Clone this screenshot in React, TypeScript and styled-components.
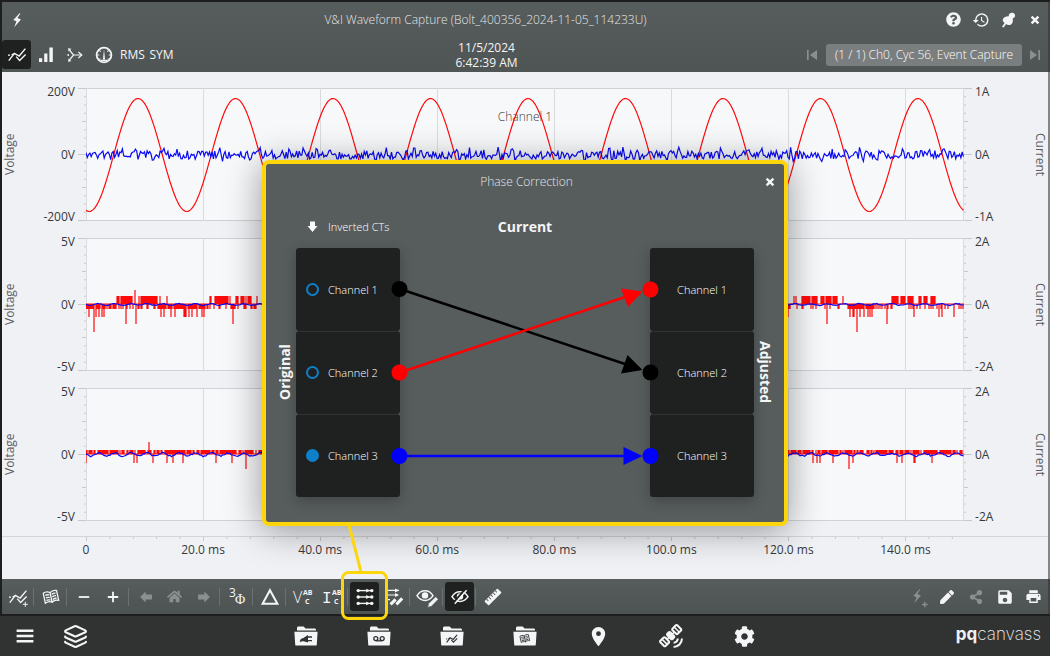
import React from 'react';
import styled, { createGlobalStyle, css } from 'styled-components';
import { FaQuestionCircle, FaHome, FaShareAlt, FaCog, FaPen } from 'react-icons/fa';
import { MdHistory, MdSkipPrevious, MdSkipNext, MdSave, MdPrint, MdSatelliteAlt, MdLocationOn } from 'react-icons/md';
import { Layers } from 'lucide-react';

const GlobalStyle = createGlobalStyle`
  *, *::before, *::after { box-sizing: border-box; }
  body { margin: 0; background: #1d1f1f; font-family: "Open Sans", "Noto Sans", sans-serif; font-size: 12px; }
  button { font: inherit; color: inherit; }
`;

/* ---------- shell ---------- */

const Page = styled.div`
  min-height: 100vh;
  display: flex;
  flex-direction: column;
  background: #1d1f1f;
  color: #f4f5f6;
`;

const AppWindow = styled.main`
  position: relative;
  flex: 1;
  display: flex;
  flex-direction: column;
  margin: 2px 0 2px 2px;
`;

const Header = styled.header`
  background: linear-gradient(#575c5c, #4f5454);
  border-right: 2px solid #3e4242;
`;

const Bar = styled.div`
  display: grid;
  grid-template-columns: auto 1fr auto;
  align-items: center;
  height: 35px;
`;

const Title = styled.h1`
  margin: 0;
  text-align: center;
  font-size: 12px;
  font-weight: 300;
  color: #e4e7e7;
`;

const Group = styled.div<{ $end?: boolean }>`
  display: flex;
  align-items: center;
  justify-content: ${p => (p.$end ? 'flex-end' : 'flex-start')};
`;

const ToolButton = styled.button<{ $active?: boolean; $w?: number }>`
  position: relative;
  display: flex;
  align-items: center;
  justify-content: center;
  flex: none;
  width: ${p => p.$w ?? 29}px;
  height: 29px;
  padding: 0;
  border: 0;
  border-radius: 3px;
  background: ${p => (p.$active ? '#1f2121' : 'transparent')};
  color: #f4f5f6;
  cursor: pointer;
  &:disabled { color: #8b8f8f; cursor: default; }
  svg { flex: none; }
`;

const Stamp = styled.time`
  text-align: center;
  line-height: 15px;
`;

const Capture = styled.button`
  width: 196px;
  height: 22px;
  padding: 0;
  border: 0;
  border-radius: 3px;
  background: #7b7e7e;
  font-weight: 300;
  color: #fff;
  white-space: nowrap;
`;

/* ---------- charts ---------- */

const Charts = styled.section`
  flex: 1;
  display: flex;
  flex-direction: column;
  background: #f0f1f5;
  border-right: 2px solid #858787;
  color: #36393b;
`;

const ChartList = styled.div`
  flex: 1;
  display: flex;
  flex-direction: column;
  gap: 17px;
  padding: 16px 0 15px;
`;

const ChartRow = styled.div`
  flex: 1;
  min-height: 133px;
  display: grid;
  grid-template-columns: 84px 1fr 84px;
`;

const Axis = styled.div<{ $right?: boolean }>`
  display: flex;
  flex-direction: ${p => (p.$right ? 'row-reverse' : 'row')};
  align-items: stretch;
`;

const AxisName = styled.div<{ $right?: boolean }>`
  width: 16px;
  line-height: 16px;
  writing-mode: vertical-rl;
  text-align: center;
  color: #5a5d60;
  ${p => !p.$right && css`transform: rotate(180deg);`}
`;

const AxisValues = styled.div<{ $right?: boolean }>`
  flex: 1;
  display: flex;
  flex-direction: column;
  justify-content: space-between;
  margin: -4px 0;
  padding: 0 3px;
  line-height: 16px;
  text-align: ${p => (p.$right ? 'left' : 'right')};
`;

const Ticks = styled.svg`
  display: block;
  flex: none;
  width: 8px;
  height: 100%;
`;

const Plot = styled.div`
  position: relative;
  background: #f7f8fa;
`;

const PlotSvg = styled.svg`
  position: absolute;
  inset: 0;
  width: 100%;
  height: 100%;
`;

const PlotName = styled.span`
  position: absolute;
  top: 21px;
  left: 0;
  right: 0;
  line-height: 16px;
  text-align: center;
  font-weight: 300;
  color: #36393b;
`;

const TimeAxis = styled.div`
  height: 43px;
  padding: 0 84px;
  border-top: 1px solid #d2d4d7;
`;

const TimeTicks = styled.svg`
  display: block;
  width: 100%;
  height: 5px;
`;

const TimeLabels = styled.div`
  display: grid;
  grid-template-columns: repeat(7, 2fr) 1fr;
  line-height: 16px;
`;

const TimeLabel = styled.span`
  display: flex;
  justify-content: center;
  width: 0;
  white-space: nowrap;
`;

const PLOT_W = 878;
const PLOT_H = 133;
const MID = 66;
const CYCLE = 97.5;

function random(seed: number) {
  let s = seed;
  return () => {
    s = (s * 1664525 + 1013904223) % 4294967296;
    return s / 4294967296;
  };
}

type Pt = [number, number];
const toPath = (pts: Pt[]) => 'M' + pts.map(([x, y]) => `${x.toFixed(1)} ${y.toFixed(1)}`).join('L');

function sine() {
  const pts: Pt[] = [];
  for (let x = 0; x <= PLOT_W; x += 1.5) {
    pts.push([x, MID + 1 - 56.5 * Math.cos((2 * Math.PI * (x - 52)) / CYCLE)]);
  }
  return toPath(pts);
}

function noise() {
  const r = random(17);
  const pts: Pt[] = [];
  const period = CYCLE / 7;
  for (let x = 0; x <= PLOT_W; x += 1.3) {
    const ph = (x % period) / period;
    const spike = ph > 0.5 && ph < 0.62 ? -3.5 : ph > 0.72 && ph < 0.86 ? 3 : 0;
    pts.push([x, MID + 0.8 + spike + (r() - 0.5) * 8.5]);
  }
  return toPath(pts);
}

function ripple(amp: number, seed: number) {
  const r = random(seed);
  const pts: Pt[] = [];
  for (let x = 0; x <= PLOT_W; x += 1.5) {
    pts.push([x, MID + 0.5 + amp * Math.sin((2 * Math.PI * x) / 16.2) + (r() - 0.5) * amp]);
  }
  return toPath(pts);
}

/* [from, to, level, chance] */
type Run = [number, number, number, number];

function pulses(runs: Run[], spikes: Pt[], seed: number) {
  const r = random(seed);
  const strokes: string[] = [];
  runs.forEach(([a, b, level, chance]) => {
    for (let x = a; x <= b; x += 1) {
      if (r() < chance) strokes.push(`M${x} ${MID}V${MID + level}`);
    }
  });
  spikes.forEach(([x, d]) => strokes.push(`M${x} ${MID}V${MID + d}`));
  return `M0 ${MID}H${PLOT_W}` + strokes.join('');
}

const secondVoltage = pulses(
  [
    [0, 31, 5, 0.75], [31, 33, -8, 1], [35, 46, -8, 0.9], [53, 72, -8, 0.75], [32, 74, 5, 0.3],
    [74, 122, 5, 0.8], [85, 119, 13, 0.28], [124, 144, -8, 0.8], [150, 166, -8, 0.8], [124, 176, 5, 0.3],
    [702, 762, 5, 0.3], [707, 710, -8, 0.6], [716, 731, -8, 0.85], [735, 752, -8, 0.75],
    [762, 788, 5, 0.9], [762, 787, 13, 0.35], [788, 806, 5, 0.4], [806, 828, -8, 0.85],
    [833, 849, -8, 0.8], [820, 877, 5, 0.4],
  ],
  [
    [3, 13], [8, 28], [10, 13], [13, 13], [16, 13], [18, 13], [40, 20], [49, -14], [50, 20], [74, -8],
    [75, 13], [78, 13], [81, -8], [147, 20], [171, -8], [702, 13], [741, 20], [757, -8], [771, 28],
    [801, 20], [828, 13], [853, 13], [856, 13], [868, 13],
  ],
  5,
);

const thirdVoltage = pulses(
  [[0, 877, -4, 0.8]],
  [
    [0, 9], [48, 9], [51, 9], [63, -12], [67, 9], [81, 9], [87, 9], [97, 9], [130, 9], [146, 9], [160, 15],
    [727, 9], [731, 9], [734, 9], [747, 9], [763, 15], [767, 9], [811, 9], [816, 9], [828, 9], [829, 9], [846, 9],
  ],
  9,
);

interface Channel {
  name?: string;
  volts: string;
  amps: string;
  voltage: string;
  current: string;
}

const channels: Channel[] = [
  { name: 'Channel 1', volts: '200V', amps: '1A', voltage: sine(), current: noise() },
  { volts: '5V', amps: '2A', voltage: secondVoltage, current: ripple(0.8, 3) },
  { volts: '5V', amps: '2A', voltage: thirdVoltage, current: ripple(1.5, 8) },
];

function AxisTicks({ right }: { right?: boolean }) {
  const marks = Array.from({ length: 17 }, (_, i) => {
    const len = i % 8 === 0 ? 8 : i % 4 === 0 ? 4 : 2;
    const y = 0.5 + (i * 132) / 16;
    return right ? `M0 ${y}h${len}` : `M8 ${y}h${-len}`;
  });
  return (
    <Ticks viewBox="0 0 8 133" preserveAspectRatio="none" aria-hidden="true">
      <path d={marks.join('')} stroke="#c6c8cb" fill="none" />
    </Ticks>
  );
}

function Chart({ name, volts, amps, voltage, current }: Channel) {
  return (
    <ChartRow>
      <Axis>
        <AxisName>Voltage</AxisName>
        <AxisValues><span>{volts}</span><span>0V</span><span>-{volts}</span></AxisValues>
        <AxisTicks />
      </Axis>
      <Plot>
        {name && <PlotName>{name}</PlotName>}
        <PlotSvg viewBox={`0 0 ${PLOT_W} ${PLOT_H}`} preserveAspectRatio="none" aria-hidden="true">
          <path d="M0 .5H878M0 132.5H878" stroke="#cfd1d4" fill="none" />
          <path d={`M.5 0V133M877.5 0V133${Array.from({ length: 7 }, (_, i) => `M${(i + 1) * 117 + 0.5} 0V133`).join('')}`} stroke="#d9dbde" fill="none" />
          <path d={voltage} stroke="#ff0a0a" strokeWidth="1.2" fill="none" />
          <path d={current} stroke="#0a0af5" strokeWidth="1.2" fill="none" />
        </PlotSvg>
      </Plot>
      <Axis $right>
        <AxisName $right>Current</AxisName>
        <AxisValues $right><span>{amps}</span><span>0A</span><span>-{amps}</span></AxisValues>
        <AxisTicks right />
      </Axis>
    </ChartRow>
  );
}

const times = ['0', '20.0 ms', '40.0 ms', '60.0 ms', '80.0 ms', '100.0 ms', '120.0 ms', '140.0 ms'];

/* ---------- footer ---------- */

const Footer = styled.footer`
  display: flex;
  align-items: center;
  justify-content: space-between;
  height: 35px;
  padding-left: 1px;
  background: linear-gradient(#575c5c, #4d5252);
  border-right: 2px solid #3e4242;
`;

const Separator = styled.span`
  width: 4px;
  height: 18px;
  border-left: 1px solid transparent;
  border-right: 2px solid transparent;
  background-color: #6b7070;
  background-clip: content-box;
`;

const Nav = styled.nav`
  display: grid;
  grid-template-columns: 1fr auto 1fr;
  align-items: center;
  height: 40px;
  background: #313333;
`;

const Logo = styled.a`
  justify-self: end;
  margin: 0 9px 4px 0;
  font-family: Inter, "Liberation Sans", sans-serif;
  font-size: 17px;
  font-weight: 200;
  line-height: 20px;
  color: #f0f1f2;
  text-decoration: none;
  b { font-weight: 700; }
`;

const Callout = styled.svg`
  position: absolute;
  top: -57px;
  left: -10px;
  z-index: 3;
  width: 49px;
  height: 96px;
  pointer-events: none;
`;

/* ---------- dialog ---------- */

const Dialog = styled.section`
  position: absolute;
  top: 158px;
  left: calc(50% - 264px);
  width: 526px;
  z-index: 2;
  border: 4px solid #fcd50a;
  border-radius: 7px;
  background: #575c5c;
  box-shadow: 0 4px 36px rgba(0, 0, 0, 0.4);
  color: #f4f5f6;
`;

const DialogBar = styled.header`
  display: grid;
  grid-template-columns: 32px 1fr 29px;
  align-items: center;
  height: 35px;
`;

const DialogTitle = styled.h2`
  margin: 0;
  text-align: center;
  font-size: 12px;
  font-weight: 300;
  color: #e4e7e7;
`;

const Mapping = styled.div`
  display: grid;
  grid-template-columns: 30px 104px 1fr 104px 30px;
  grid-template-rows: 49px auto;
  padding-bottom: 25px;
`;

const InvertedHead = styled.div`
  grid-column: 2;
  display: flex;
  align-items: center;
  gap: 9px;
  padding: 5px 0 0 10px;
  font-size: 11px;
  font-weight: 300;
  color: #fff;
  white-space: nowrap;
`;

const Quantity = styled.h3`
  grid-column: 3;
  margin: 0;
  padding-top: 6px;
  text-align: center;
  line-height: 43px;
  font-size: 14px;
  font-weight: 700;
`;

const SideName = styled.div<{ $flip?: boolean }>`
  grid-row: 2;
  justify-self: ${p => (p.$flip ? 'end' : 'start')};
  writing-mode: vertical-rl;
  line-height: 22px;
  text-align: center;
  font-size: 14px;
  font-weight: 700;
  ${p => p.$flip && css`transform: rotate(180deg);`}
`;

const Column = styled.div`
  grid-row: 2;
  display: flex;
  flex-direction: column;
  border-radius: 3px;
  box-shadow: 0 4px 14px rgba(0, 0, 0, 0.25);
`;

const Cell = styled.label<{ $plain?: boolean }>`
  display: flex;
  align-items: center;
  justify-content: ${p => (p.$plain ? 'center' : 'flex-start')};
  gap: 9px;
  height: 83px;
  padding: 0 0 1px ${p => (p.$plain ? 0 : 10)}px;
  border-radius: 3px;
  background: #1f2121;
  font-size: 11px;
  font-weight: 300;
  color: #fff;
  & + & { box-shadow: inset 0 1px #303434; }
`;

const Invert = styled.input`
  appearance: none;
  width: 13px;
  height: 13px;
  margin: 0;
  border: 2px solid #0e80ca;
  border-radius: 50%;
  &:checked { background: #0e80ca; }
`;

const Links = styled.svg`
  grid-row: 2;
  grid-column: 3;
  z-index: 1;
  width: 100%;
  height: 249px;
  overflow: visible;
`;

/* ---------- icons ---------- */

function Icon({ size = 20, children }: { size?: number; children: React.ReactNode }) {
  return (
    <svg width={size} height={size} viewBox="0 0 20 20" fill="none" stroke="currentColor" strokeWidth="1.4" aria-hidden="true">
      {children}
    </svg>
  );
}

const fill = { fill: 'currentColor', stroke: 'none' };

const BoltShape = () => <path {...fill} d="M12.6 3.2 6.3 10l3.2 1.3L7.2 17.2 14 9.4l-3.5-1.3 3-4.9z" />;
const WaveShape = () => (
  <>
    <path d="M1.8 15.6 7.4 8.4l4.8 2.6 6.2-7.4" />
    <path d="M4.6 9.8 7.2 8.8M9.2 11.6l3.4 3.8 6-6" />
    <circle {...fill} cx="2" cy="10.2" r=".9" />
  </>
);
const WaveIcon = () => <Icon><WaveShape /></Icon>;
const WavePlusIcon = () => (
  <Icon><WaveShape /><path strokeWidth="1" d="M14.8 17.3h5M17.3 14.8v5" /></Icon>
);
const BarsIcon = () => (
  <Icon><path {...fill} d="M3 13.2h3.2V17H3zM8.2 8.4h3.2V17H8.2zM13.4 2.6h3.4V17h-3.4z" /></Icon>
);
const VectorsIcon = () => (
  <Icon>
    <path strokeWidth="1.2" d="M4.4 5 8.6 10 4.4 15M8.6 10H17" />
    <path {...fill} d="m3 3.2 3.4.6-2.8 2.8zM3 16.800l.6-3.400 2.800 2.800z" />
    <path strokeWidth="1.2" d="m13.400 7 3.400 3-3.400 3" />
    <circle {...fill} cx="3.2" cy="10" r=".9" />
  </Icon>
);
const GaugeIcon = () => (
  <Icon>
    <circle cx="10" cy="10" r="7.4" strokeWidth="1.8" />
    <path {...fill} d="m10 4.600 1.100 9.800H8.900z" />
    <path strokeWidth="1.2" d="M3.2 10h2M14.8 10h2M5.4 5.4l1.2 1.2M14.6 5.4l-1.2 1.2M5.4 14.6l1-1M14.6 14.6l-1-1M7 15.4h6" />
  </Icon>
);
const PinIcon = () => (
  <Icon>
    <path {...fill} d="M11.800 3.400c1.400-1.200 3.600-1 4.800.6.800 1.200.6 2.800-.6 3.800l-1.400.6c1 3.200-.6 6.400-3.400 6.600-1.200.2-2.200-.2-3-1L5.600 17.400 4 16.800l2.600-3.800c-1.200-.8-2-2-1.800-3.400.4-2.200 2.800-3.600 6-3.400-.2-1.200.2-2.200 1-2.800z" />
  </Icon>
);
const CloseIcon = () => <Icon><path strokeWidth="2.4" d="m6.600 6.600 6.800 6.800M13.400 6.600l-6.800 6.800" /></Icon>;
const BookShape = () => (
  <g transform="rotate(-12 10 10)">
    <path strokeWidth="1.3" d="M10 5.600C8 4 5 4 3.200 4.800v10c2-.8 5-.8 6.800.6 1.800-1.400 4.800-1.400 6.800-.6v-10C15 4 12 4 10 5.600zM10 5.600v9.800" />
    <path strokeWidth="1.3" d="M4.800 7.200c1.400-.4 2.600-.2 4 .4M4.800 9.800c1.400-.4 2.600-.2 4 .4M4.800 12.400c1.400-.4 2.600-.2 4 .4M15.200 7.200c-1.400-.4-2.600-.2-4 .4M15.200 9.800c-1.400-.4-2.600-.2-4 .4M15.200 12.400c-1.400-.4-2.600-.2-4 .4" />
  </g>
);
const BookIcon = () => <Icon><BookShape /></Icon>;
const MinusIcon = () => <Icon><path strokeWidth="1.8" d="M4.800 10h10.400" /></Icon>;
const PlusIcon = () => <Icon><path strokeWidth="1.8" d="M4.800 10h10.400M10 4.800v10.400" /></Icon>;
const ArrowIcon = ({ turn }: { turn: number }) => (
  <Icon size={16}><path {...fill} transform={`rotate(${turn} 10 10)`} d="M2.600 10 9.600 3v4h7.800v6H9.600v4z" /></Icon>
);
const DeltaIcon = () => <Icon><path strokeWidth="2" d="M10 3.200 17.400 16.800H2.600z" /></Icon>;
const RemapIcon = () => (
  <Icon>
    {[3.6, 10, 16.4].map(y => (
      <g key={y}>
        <path strokeWidth="1.4" d={`M3 ${y}h14`} />
        <circle {...fill} cx="3.2" cy={y} r="1.7" />
        <circle {...fill} cx="16.8" cy={y} r="1.7" />
        <path {...fill} d={`M15 ${y}l-3.800-1.900v3.800z`} />
      </g>
    ))}
  </Icon>
);
const RemapEditIcon = () => (
  <Icon>
    <path strokeWidth="1.2" d="M2 3.400h13M2 8h12M2 12.600h4" />
    <path {...fill} d="m11 1.400 4 2-4 2zM11 6 15 8l-4 2z" />
    <path strokeWidth="3" d="m6.600 17.400 5-5M12.400 17.400l5.800-6" />
  </Icon>
);
const EyeShape = () => (
  <>
    <path strokeWidth="1.5" d="M2 9.600C4 6.400 7 4.800 10 4.800s6 1.600 8 4.800c-2 3.200-5 4.800-8 4.800S4 12.800 2 9.600z" />
    <circle {...fill} cx="10" cy="9.400" r="3.200" />
  </>
);
const EyeEditIcon = () => (
  <svg width="24" height="22" viewBox="0 0 24 22" fill="none" stroke="currentColor" aria-hidden="true">
    <EyeShape />
    <path fill="currentColor" stroke="#525757" strokeWidth=".8" d="m20.800 10.600 2.600 2.600-7 7.200-3.800 1 .9-3.800z" />
  </svg>
);
const EyeOffIcon = () => (
  <Icon>
    <EyeShape />
    <path stroke="#1f2121" strokeWidth="2" d="M3.600 15.600 14.800 2.600" />
    <path strokeWidth="1.5" d="M4.800 16.800 16.600 3.200" />
  </Icon>
);
const RulerIcon = () => (
  <Icon>
    <g transform="rotate(-45 10 10)">
      <rect {...fill} x=".8" y="7" width="18.400" height="6" rx=".8" />
      <path stroke="#545959" strokeWidth="1" d="M4 7v2.400M7 7v3.200M10 7v2.400M13 7v3.200M16 7v2.400" />
    </g>
  </Icon>
);
const BoltPlusIcon = () => (
  <svg width="22" height="22" viewBox="0 0 22 22" fill="none" stroke="currentColor" aria-hidden="true">
    <BoltShape />
    <path strokeWidth="1.3" d="M15 18.500h5.600M17.800 15.700v5.600" />
  </svg>
);
const MenuIcon = () => <Icon><path strokeWidth="2.6" d="M1.600 4.800h16.800M1.600 10h16.800M1.600 15.200h16.800" /></Icon>;

const LetterSvg = styled.svg`
  overflow: visible;
  font-family: "Open Sans", sans-serif;
  fill: currentColor;
`;

const PhaseIcon = () => (
  <LetterSvg width="20" height="20" viewBox="0 0 20 20">
    <text x="2" y="10" fontSize="12">3</text>
    <text x="8" y="17" fontSize="14" fontFamily="Liberation Serif">Φ</text>
  </LetterSvg>
);
const PhasesIcon = ({ letter }: { letter: string }) => (
  <LetterSvg width="20" height="20" viewBox="0 0 20 20">
    {letter === 'I'
      ? <text x="0" y="16" fontSize="16" fontFamily="Liberation Mono">I</text>
      : <text x="0" y="16" fontSize="16" fontWeight="300">V</text>}
    <text x="10" y="8" fontSize="7" fontWeight="700">AB</text>
    <text x="12" y="17" fontSize="7" fontWeight="700">C</text>
  </LetterSvg>
);

function FolderIcon({ children }: { children: React.ReactNode }) {
  return (
    <svg width="24" height="20" viewBox="0 0 24 20" fill="none" aria-hidden="true">
      <path fill="#f4f5f6" d="M3 4.600V2.200C3 1.200 3.600.6 4.600.6h5l2 1.800h9c.8 0 1.400.6 1.400 1.400v.8z" />
      <path fill="#f4f5f6" d="M.4 5.800h23.200l-.8 12.600c0 .8-.6 1.200-1.200 1.200H2.400c-.8 0-1.200-.4-1.200-1.200z" />
      <g stroke="#313333" strokeWidth="1.3">{children}</g>
    </svg>
  );
}

const folders = [
  {
    name: 'Loads',
    art: (
      <>
        <path fill="#313333" stroke="none" d="M5.800 16.200c0-2.400 1.200-4 3.600-4.200L14 9v7.600l-4.400-1.400c-1.400-.2-2.600 0-3.800 1z" />
        <path d="M14 11h4M14 14.600h4" />
      </>
    ),
  },
  {
    name: 'Recordings',
    art: (
      <>
        <circle cx="8.800" cy="12.600" r="2" />
        <circle cx="15.200" cy="12.600" r="2" />
        <path d="M8.800 14.800h6.400" />
      </>
    ),
  },
  { name: 'Waveforms', art: <g transform="translate(5.500 6.500) scale(.63)" strokeWidth="1.8" color="#313333"><WaveShape /></g> },
  { name: 'Reports', art: <g transform="translate(5.500 6.300) scale(.63)" strokeWidth="1.8"><BookShape /></g> },
];

/* ---------- assembled page ---------- */

function PhaseCorrection() {
  return (
    <Dialog role="dialog" aria-label="Phase Correction">
      <DialogBar>
        <span />
        <DialogTitle>Phase Correction</DialogTitle>
        <ToolButton aria-label="Close"><CloseIcon /></ToolButton>
      </DialogBar>
      <Mapping>
        <InvertedHead>
          <svg width="13" height="13" viewBox="0 0 13 13" aria-hidden="true">
            <path fill="#f8f9fa" d="M4 1.500h5v4.500h2.500L6.500 12 1.500 6H4z" />
          </svg>
          Inverted CTs
        </InvertedHead>
        <Quantity>Current</Quantity>
        <SideName $flip>Original</SideName>
        <Column>
          {[1, 2, 3].map(n => (
            <Cell key={n}>
              <Invert type="checkbox" defaultChecked={n === 3} />
              Channel {n}
            </Cell>
          ))}
        </Column>
        <Links viewBox="0 0 250 249" aria-hidden="true">
          <g stroke="#000" fill="#000">
            <path strokeWidth="2.5" d="M0 41 228 117" />
            <path stroke="none" d="M242.500 122 227.500 107 221 125.500z" />
            <circle stroke="none" cx="-.5" cy="41" r="8" />
            <circle stroke="none" cx="250.500" cy="124.500" r="8" />
          </g>
          <g stroke="#f00" fill="#f00">
            <path strokeWidth="2.5" d="M0 124.500 228 48" />
            <path stroke="none" d="M242.500 43.500 221 40.500 228 59z" />
            <circle stroke="none" cx="-.5" cy="124.500" r="8" />
            <circle stroke="none" cx="250.500" cy="41.500" r="8" />
          </g>
          <g stroke="#00f" fill="#00f">
            <path strokeWidth="2.5" d="M0 208H228" />
            <path stroke="none" d="M242.500 208 223.500 199v18z" />
            <circle stroke="none" cx="-.5" cy="208" r="8" />
            <circle stroke="none" cx="250.500" cy="208" r="8" />
          </g>
        </Links>
        <Column>
          {[1, 2, 3].map(n => <Cell as="div" $plain key={n}>Channel {n}</Cell>)}
        </Column>
        <SideName>Adjusted</SideName>
      </Mapping>
    </Dialog>
  );
}

export default function App() {
  return (
    <Page>
      <GlobalStyle />
      <AppWindow>
        <Header>
          <Bar>
            <Group><ToolButton aria-label="Events"><Icon><BoltShape /></Icon></ToolButton></Group>
            <Title>V&amp;I Waveform Capture (Bolt_400356_2024-11-05_114233U)</Title>
            <Group $end>
              <ToolButton $w={27} aria-label="Help"><FaQuestionCircle size={15} /></ToolButton>
              <ToolButton $w={27} aria-label="History"><MdHistory size={18} /></ToolButton>
              <ToolButton $w={27} aria-label="Pin"><PinIcon /></ToolButton>
              <ToolButton $w={27} aria-label="Close window"><CloseIcon /></ToolButton>
            </Group>
          </Bar>
          <Bar>
            <Group>
              <ToolButton $active aria-label="Waveform"><WaveIcon /></ToolButton>
              <ToolButton aria-label="Harmonics"><BarsIcon /></ToolButton>
              <ToolButton aria-label="Vectors"><VectorsIcon /></ToolButton>
              <ToolButton aria-label="Meters"><GaugeIcon /></ToolButton>
              <ToolButton>RMS</ToolButton>
              <ToolButton>SYM</ToolButton>
            </Group>
            <Stamp>11/5/2024<br />6:42:39 AM</Stamp>
            <Group $end>
              <ToolButton disabled aria-label="Previous event"><MdSkipPrevious size={20} /></ToolButton>
              <Capture>(1 / 1) Ch0, Cyc 56, Event Capture</Capture>
              <ToolButton $w={26} disabled aria-label="Next event"><MdSkipNext size={20} /></ToolButton>
            </Group>
          </Bar>
        </Header>

        <Charts>
          <ChartList>
            {channels.map((c, i) => <Chart key={i} {...c} />)}
          </ChartList>
          <TimeAxis>
            <TimeTicks viewBox="0 0 878 5" preserveAspectRatio="none" aria-hidden="true">
              <path
                stroke="#c6c8cb"
                d={Array.from({ length: 38 }, (_, i) => `M${0.5 + i * 23.4} 0v${i % 5 === 0 ? 4 : 2}`).join('')}
              />
            </TimeTicks>
            <TimeLabels>
              {times.map(t => <TimeLabel key={t}>{t}</TimeLabel>)}
            </TimeLabels>
          </TimeAxis>
        </Charts>

        <Footer>
          <Group>
            <ToolButton aria-label="Add trace"><WavePlusIcon /></ToolButton>
            <Separator />
            <ToolButton aria-label="Report"><BookIcon /></ToolButton>
            <Separator />
            <ToolButton aria-label="Zoom out"><MinusIcon /></ToolButton>
            <ToolButton aria-label="Zoom in"><PlusIcon /></ToolButton>
            <Separator />
            <ToolButton disabled aria-label="Back"><ArrowIcon turn={0} /></ToolButton>
            <ToolButton disabled aria-label="Home"><FaHome size={15} /></ToolButton>
            <ToolButton disabled aria-label="Forward"><ArrowIcon turn={180} /></ToolButton>
            <Separator />
            <ToolButton aria-label="Three phase"><PhaseIcon /></ToolButton>
            <Separator />
            <ToolButton aria-label="Delta"><DeltaIcon /></ToolButton>
            <Separator />
            <ToolButton aria-label="Voltage phases"><PhasesIcon letter="V" /></ToolButton>
            <ToolButton aria-label="Current phases"><PhasesIcon letter="I" /></ToolButton>
            <Separator />
            <ToolButton $active aria-label="Phase correction">
              <RemapIcon />
              <Callout viewBox="0 0 49 96" fill="none" stroke="#fcd50a" aria-hidden="true">
                <path strokeWidth="3" d="m9 0 12 47" />
                <rect x="2.500" y="47.500" width="44" height="46" rx="6" strokeWidth="3" />
              </Callout>
            </ToolButton>
            <ToolButton aria-label="Edit correction"><RemapEditIcon /></ToolButton>
            <Separator />
            <ToolButton aria-label="Edit view"><EyeEditIcon /></ToolButton>
            <Separator />
            <ToolButton $active aria-label="Hide"><EyeOffIcon /></ToolButton>
            <Separator />
            <ToolButton aria-label="Measure"><RulerIcon /></ToolButton>
          </Group>
          <Group $end>
            <ToolButton disabled aria-label="Add event"><BoltPlusIcon /></ToolButton>
            <ToolButton aria-label="Edit"><FaPen size={14} /></ToolButton>
            <ToolButton disabled aria-label="Share"><FaShareAlt size={14} /></ToolButton>
            <ToolButton aria-label="Save"><MdSave size={18} /></ToolButton>
            <ToolButton aria-label="Print"><MdPrint size={17} /></ToolButton>
          </Group>
        </Footer>

        <PhaseCorrection />
      </AppWindow>

      <Nav>
        <Group>
          <ToolButton $w={50} aria-label="Menu"><MenuIcon /></ToolButton>
          <ToolButton $w={50} aria-label="Layers"><Layers size={25} strokeWidth={2} /></ToolButton>
        </Group>
        <Group>
          {folders.map(f => (
            <ToolButton $w={73} key={f.name} aria-label={f.name}><FolderIcon>{f.art}</FolderIcon></ToolButton>
          ))}
          <ToolButton $w={73} aria-label="Map"><MdLocationOn size={23} /></ToolButton>
          <ToolButton $w={73} aria-label="Satellite"><MdSatelliteAlt size={25} /></ToolButton>
          <ToolButton $w={73} aria-label="Settings"><FaCog size={21} /></ToolButton>
        </Group>
        <Logo href="#"><b>pq</b>canvass</Logo>
      </Nav>
    </Page>
  );
}
